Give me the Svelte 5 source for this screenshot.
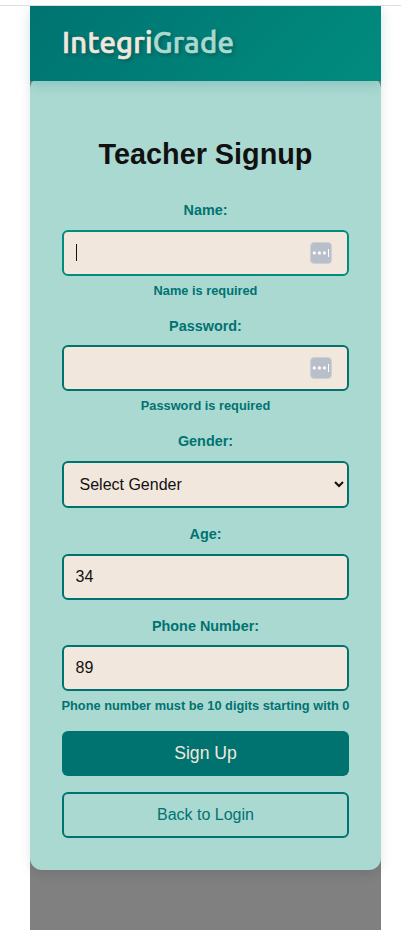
<script>
  let name = $state('');
  let password = $state('');
  let gender = $state('');
  let age = $state('34');
  let phone = $state('89');
</script>

{#snippet keyIcon()}
  <svg class="key" width="22" height="22" viewBox="0 0 22 22" aria-hidden="true">
    <rect x="0.5" y="0.5" width="21" height="21" rx="3.5" fill="#b8bfcb" stroke="#cfd0d3" />
    <circle cx="4.3" cy="10.9" r="1.6" fill="#fff" />
    <circle cx="9.4" cy="10.9" r="1.6" fill="#fff" />
    <circle cx="14.5" cy="10.9" r="1.6" fill="#fff" />
    <rect x="18" y="7" width="1" height="8" fill="#fff" />
  </svg>
{/snippet}

<div class="page">
  <div class="frame">
    <header>
      <div class="logo"><span class="a">Integri</span><span class="b">Grade</span></div>
    </header>
    <main>
      <h1>Teacher Signup</h1>
      <form onsubmit={(e) => e.preventDefault()}>
        <label for="name">Name:</label>
        <div class="field">
          <input id="name" class="active" bind:value={name} />
          <span class="caret"></span>
          {@render keyIcon()}
        </div>
        <p class="error">Name is required</p>

        <label class="pw" for="password">Password:</label>
        <div class="field short">
          <input id="password" type="password" bind:value={password} />
          {@render keyIcon()}
        </div>
        <p class="error">Password is required</p>

        <label class="gen" for="gender">Gender:</label>
        <select id="gender" bind:value={gender}>
          <option value="">Select Gender</option>
          <option value="m">Male</option>
          <option value="f">Female</option>
        </select>

        <label class="age" for="age">Age:</label>
        <div class="field"><input id="age" bind:value={age} /></div>

        <label class="phone" for="phone">Phone Number:</label>
        <div class="field short"><input id="phone" bind:value={phone} /></div>
        <p class="error">Phone number must be 10 digits starting with 0</p>

        <button class="primary" type="submit">Sign Up</button>
        <button class="secondary" type="button">Back to Login</button>
      </form>
    </main>
  </div>
</div>

<style>
  :global(body) { background: #fff; }
  * { box-sizing: border-box; }
  .page {
    height: 930px;
    padding-top: 5px;
    overflow: hidden;
    font-family: "Liberation Sans", Arial, sans-serif;
  }
  .page::before {
    content: "";
    display: block;
    height: 1px;
    background: #dedede;
  }
  .frame {
    width: 351px;
    height: 924px;
    margin-left: 30px;
    background: #808080;
  }
  header {
    position: relative;
    z-index: 1;
    height: 75px;
    padding: 0 0 1px 32px;
    display: flex;
    align-items: center;
    background: linear-gradient(135deg, #007371, #018c7e);
    box-shadow: 0 4px 12px rgba(0, 115, 113, 0.2);
    clip-path: inset(0 -20px -30px -30px);
  }
  .logo {
    font-family: Ubuntu, "Noto Sans", sans-serif;
    font-size: 29.2px;
    font-weight: 500;
    line-height: 40px;
    letter-spacing: 0.25px;
    white-space: nowrap;
    -webkit-text-stroke: 0.7px currentColor;
    text-shadow: 2px 2px 4px rgba(0, 0, 0, 0.3);
  }
  .a { color: #f1e7dc; }
  .b { color: #a9d9d1; }
  main {
    height: 793px;
    margin-top: -4px;
    padding: 55px 32px 0;
    border-radius: 12px;
    background: #aad9d1;
    box-shadow: 0 4px 12px rgba(0, 0, 0, 0.1);
  }
  h1 {
    margin: 0 0 24px;
    height: 44px;
    line-height: 44px;
    font-size: 28.8px;
    text-align: center;
    color: #111;
    white-space: nowrap;
  }
  form {
    display: flex;
    flex-direction: column;
  }
  label {
    height: 20px;
    margin-bottom: 10px;
    line-height: 20px;
    font-size: 14.4px;
    font-weight: bold;
    text-align: center;
    color: #007371;
  }
  .field { position: relative; height: 46px; }
  .field.short { margin-top: -1px; }
  input {
    display: block;
    width: 100%;
    height: 46px;
    padding: 0 11.5px;
    border: 2px solid #007371;
    border-radius: 6px;
    background: #f1e7dc;
    color: #111;
    font: 16px "Liberation Sans", Arial, sans-serif;
    outline: none;
  }
  input.active { border-color: #018c7e; }
  .caret {
    position: absolute;
    left: 14px;
    top: 14px;
    width: 1px;
    height: 17px;
    background: #111;
  }
  .key { position: absolute; right: 17px; top: 12px; }
  .error {
    height: 20px;
    margin: 5px 0 0;
    line-height: 20px;
    font-size: 12.8px;
    font-weight: bold;
    text-align: center;
    color: #007371;
    white-space: nowrap;
    display: flex;
    justify-content: center;
  }
  .pw, .gen { margin-top: 15px; }
  .age, .phone { margin-top: 16px; }
  select {
    width: 100%;
    height: 47px;
    padding: 0 11.5px;
    border: 2px solid #007371;
    border-radius: 6px;
    background: #f1e7dc;
    color: #111;
    font: 16px "Liberation Sans", Arial, sans-serif;
  }
  button {
    padding: 0;
    border-radius: 6px;
    font-family: "Liberation Sans", Arial, sans-serif;
  }
  .primary {
    height: 45px;
    margin-top: 15px;
    border: 0;
    background: #007371;
    color: #f1e7dc;
    font-size: 17.6px;
  }
  .secondary {
    height: 46px;
    margin-top: 16px;
    border: 2px solid #007371;
    background: transparent;
    color: #007371;
    font-size: 16px;
  }
</style>
